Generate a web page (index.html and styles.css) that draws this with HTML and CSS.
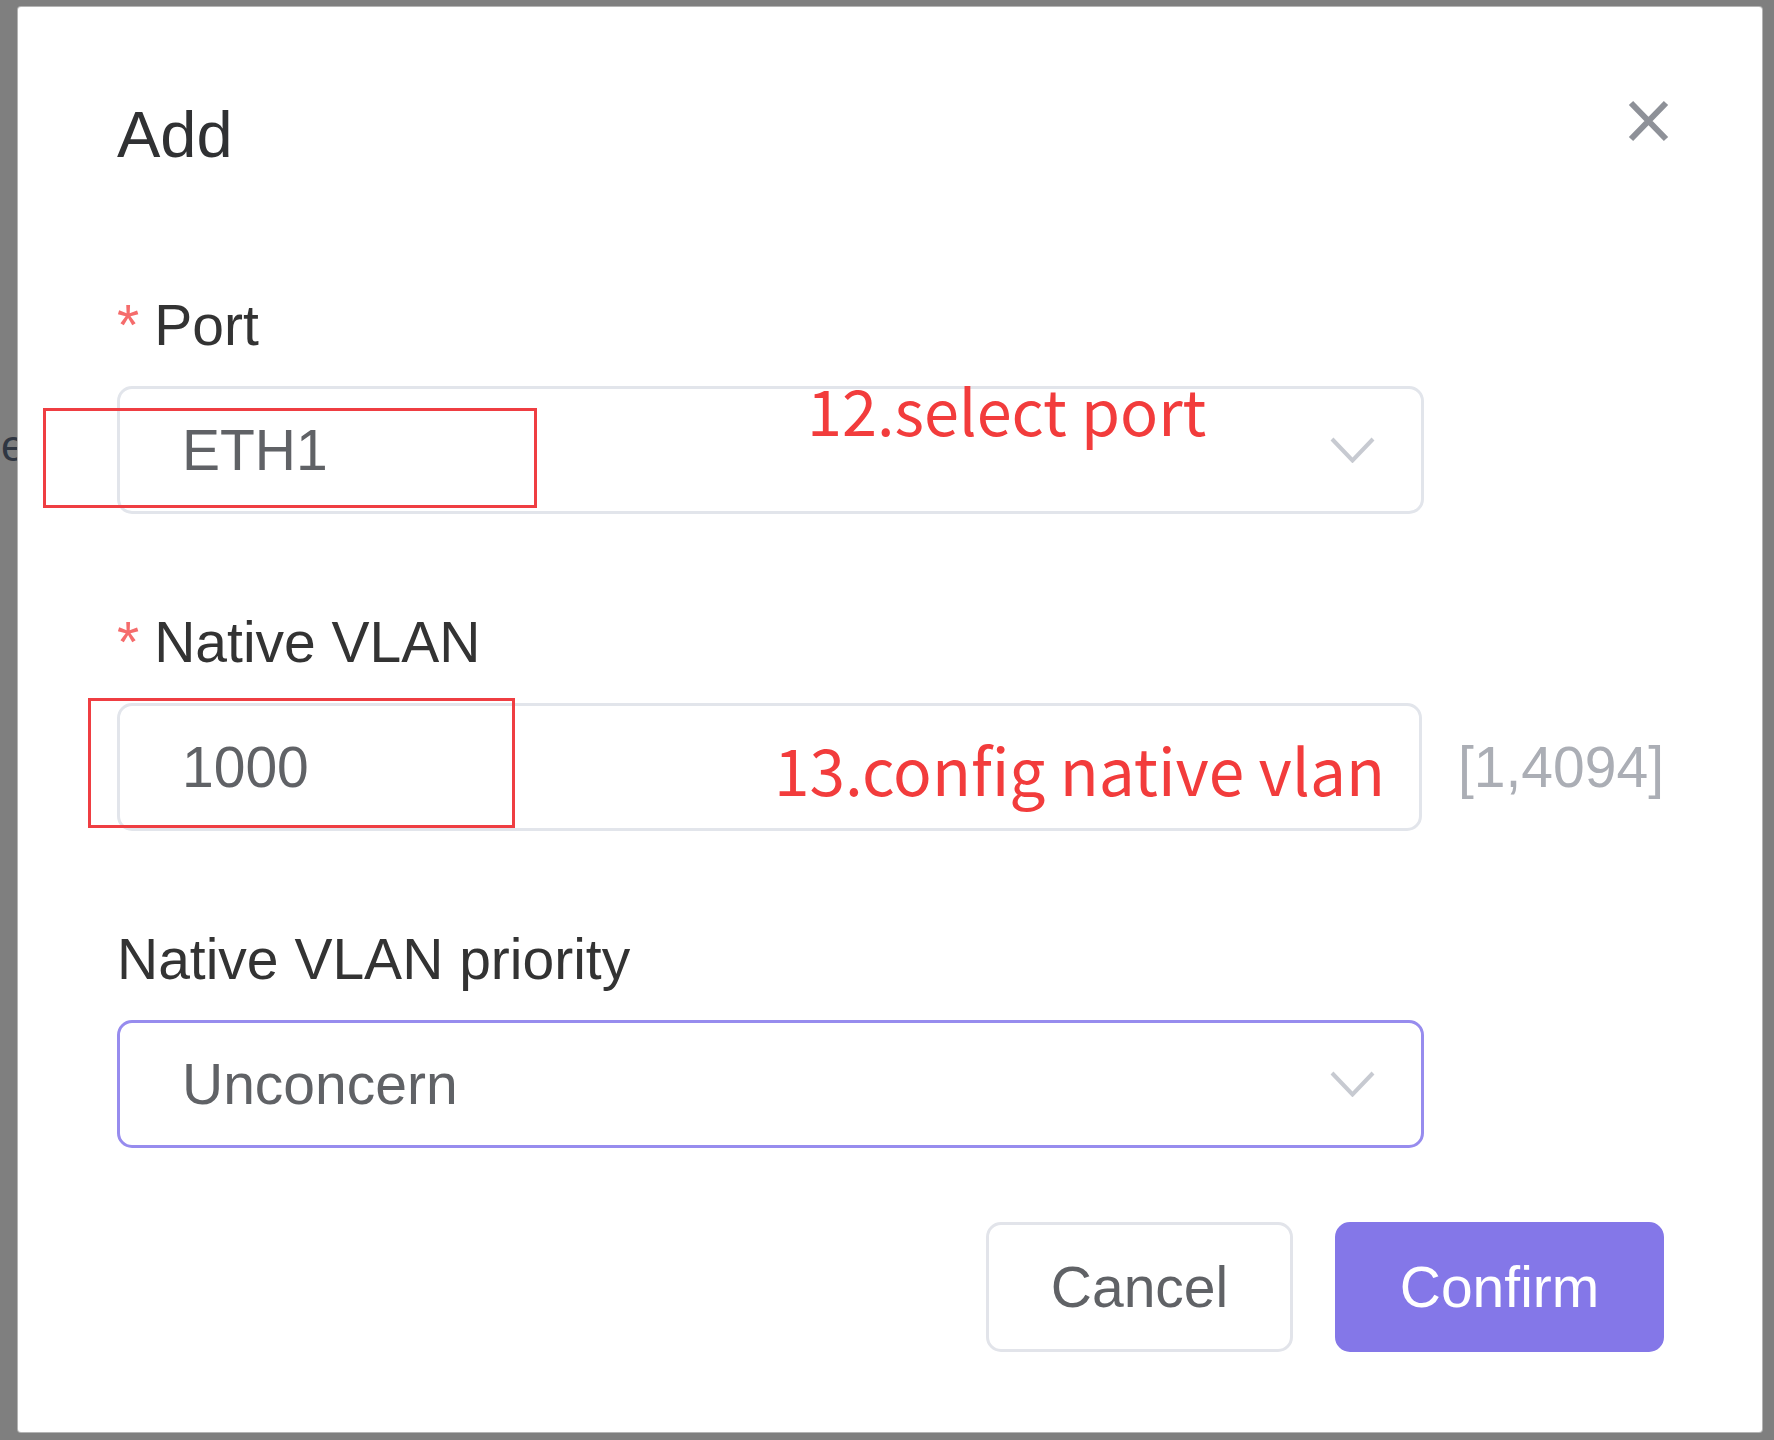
FILE: index.html
```html
<!DOCTYPE html>
<html lang="en">
<head>
<meta charset="utf-8">
<title>Add</title>
<link rel="stylesheet" href="styles.css">
</head>
<body>
<div class="page">
  <span class="bg-text">es</span>
  <div class="dialog">
    <div class="dialog-header">
      <span class="title">Add</span>
      <button class="close" type="button" aria-label="Close">
        <svg width="43" height="42" viewBox="0 0 43 42"><path d="M4 3 L39 39 M39 3 L4 39" stroke="#8e9198" stroke-width="6" fill="none"/></svg>
      </button>
    </div>
    <div class="form">
      <div class="item">
        <div class="label"><span class="req">*</span>Port</div>
        <div class="row">
          <div class="field">
            <span class="value">ETH1</span>
            <svg class="chev" width="45" height="26" viewBox="0 0 45 26"><polyline points="2,2 22.5,23.5 43,2" stroke="#c7cad1" stroke-width="4" fill="none"/></svg>
          </div>
        </div>
      </div>
      <div class="item">
        <div class="label"><span class="req">*</span>Native VLAN</div>
        <div class="row">
          <div class="field">
            <span class="value">1000</span>
          </div>
          <span class="addon">[1,4094]</span>
        </div>
      </div>
      <div class="item">
        <div class="label">Native VLAN priority</div>
        <div class="row">
          <div class="field field-focus">
            <span class="value">Unconcern</span>
            <svg class="chev" width="45" height="26" viewBox="0 0 45 26"><polyline points="2,2 22.5,23.5 43,2" stroke="#c7cad1" stroke-width="4" fill="none"/></svg>
          </div>
        </div>
      </div>
    </div>
    <div class="footer">
      <button class="btn" type="button">Cancel</button>
      <button class="btn btn-primary" type="button">Confirm</button>
    </div>

    <div class="mark mark-port"></div>
    <div class="mark mark-vlan"></div>
    <span class="note note-port">12.select port</span>
    <span class="note note-vlan">13.config native vlan</span>
  </div>
</div>
</body>
</html>
```
FILE: styles.css
```css
html, body {
  margin: 0;
  padding: 0;
}
body {
  background: #7f7f7f;
  overflow: hidden;
  font-family: "Liberation Sans", Arial, sans-serif;
}
.page {
  position: relative;
  width: 1774px;
  height: 1440px;
  padding-top: 7px;
  box-sizing: border-box;
}
.bg-text {
  position: absolute;
  left: 1px;
  top: 424px;
  font-size: 44px;
  line-height: 44px;
  color: #2f3642;
}
.dialog {
  position: relative;
  margin-left: 18px;
  width: 1744px;
  box-sizing: border-box;
  padding: 95px 98px 80px 99px;
  background: #fff;
  border-radius: 3px;
  box-shadow: 0 0 0 1px #b4b4b4;
}
.dialog-header {
  display: flex;
  justify-content: space-between;
  align-items: flex-start;
  height: 65px;
}
.title {
  font-size: 65px;
  line-height: 65px;
  color: #303133;
}
.close {
  display: block;
  width: 43px;
  height: 42px;
  margin: -2px -6px 0 0;
  padding: 0;
  border: 0;
  background: none;
}
.close svg {
  display: block;
}
.form {
  margin-top: 130px;
}
.item + .item {
  margin-top: 100px;
}
.label {
  font-size: 57px;
  line-height: 57px;
  color: #333333;
  margin-bottom: 32px;
}
.req {
  color: #f56c6c;
  margin-right: 15px;
}
.row {
  display: flex;
  align-items: center;
  gap: 36px;
}
.field {
  width: 1307px;
  height: 128px;
  box-sizing: border-box;
  border: 3px solid #e2e5eb;
  border-radius: 15px;
  padding: 0 46px 0 62px;
  display: flex;
  align-items: center;
  justify-content: space-between;
  font-size: 57px;
  color: #606266;
}
.field-focus {
  border-color: #978cee;
}
.chev {
  display: block;
}
.addon {
  font-size: 57px;
  color: #abaeb5;
}
.footer {
  display: flex;
  justify-content: flex-end;
  gap: 42px;
  margin-top: 74px;
}
.btn {
  width: 307px;
  height: 130px;
  box-sizing: border-box;
  border: 3px solid #e2e4ea;
  border-radius: 15px;
  background: #fff;
  color: #606266;
  font-family: "Liberation Sans", Arial, sans-serif;
  font-size: 57px;
  padding: 0;
}
.btn-primary {
  width: 329px;
  background: #8477e8;
  border-color: #8477e8;
  color: #fff;
}
.mark {
  position: absolute;
  border: 3px solid #ef3e42;
  box-sizing: border-box;
}
.mark-port {
  left: 25px;
  top: 401px;
  width: 494px;
  height: 100px;
}
.mark-vlan {
  left: 70px;
  top: 691px;
  width: 427px;
  height: 130px;
}
.note {
  position: absolute;
  font-family: "Noto Sans CJK SC", "Noto Sans", sans-serif;
  font-size: 63px;
  line-height: 71px;
  color: #f23c3c;
  white-space: nowrap;
}
.note-port {
  left: 789px;
  top: 366px;
}
.note-vlan {
  left: 756px;
  top: 726px;
  font-size: 64px;
}
```
